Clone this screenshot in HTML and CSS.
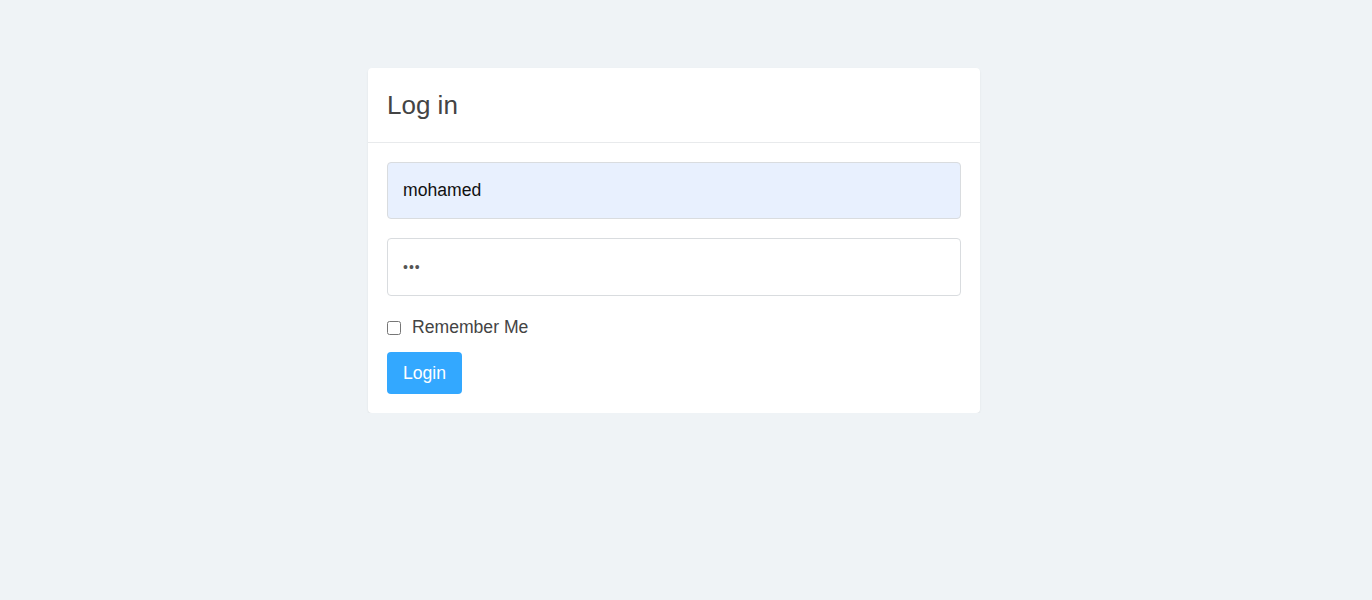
FILE: index.html
```html
<!DOCTYPE html>
<html>
<head>
<meta charset="utf-8">
<link rel="stylesheet" href="styles.css">
</head>
<body>
<div class="page">
  <div class="card">
    <div class="card-header">Log in</div>
    <div class="card-body">
      <input class="field field-filled" type="text" value="mohamed">
      <input class="field field-pass" type="password" value="abc">
      <label class="check"><input type="checkbox"><span>Remember Me</span></label>
      <button class="btn">Login</button>
    </div>
  </div>
</div>
</body>
</html>
```

FILE: styles.css
```css
html, body {
  margin: 0;
  padding: 0;
  background: #eff3f6;
  font-family: "Liberation Sans", Arial, sans-serif;
}
.page {
  display: flex;
  justify-content: center;
  padding-top: 68px;
  padding-right: 24px;
}
.card {
  width: 612px;
  background: #fff;
  border-radius: 4px;
  box-shadow: 0 1px 2px rgba(0,0,0,0.08);
}
.card-header {
  height: 75px;
  box-sizing: border-box;
  padding: 0 19px;
  display: flex;
  align-items: center;
  font-size: 26px;
  color: #444;
  border-bottom: 1px solid #e8eaec;
}
.card-body {
  padding: 19px;
  display: flex;
  flex-direction: column;
  align-items: flex-start;
}
.field {
  box-sizing: border-box;
  width: 100%;
  height: 57px;
  border: 1px solid #d9dcdf;
  border-radius: 4px;
  padding: 0 15px;
  font-family: inherit;
  font-size: 17.6px;
  color: #222;
  background: #fff;
  margin-bottom: 19px;
  outline: none;
}
.field-pass {
  height: 58px;
  color: #555;
  font-size: 14px;
  letter-spacing: 1px;
}
.field-filled {
  background: #e8f0fe;
  color: #111;
}
.check {
  display: flex;
  align-items: center;
  font-size: 17.6px;
  color: #444;
  margin-top: 2px;
  margin-bottom: 14px;
}
.check input {
  margin: 0 11px 0 0;
  width: 14px;
  height: 14px;
}
.btn {
  height: 42px;
  padding: 0 16px;
  border: none;
  border-radius: 4px;
  background: #33a8ff;
  color: #fff;
  font-family: inherit;
  font-size: 17.6px;
}
```
